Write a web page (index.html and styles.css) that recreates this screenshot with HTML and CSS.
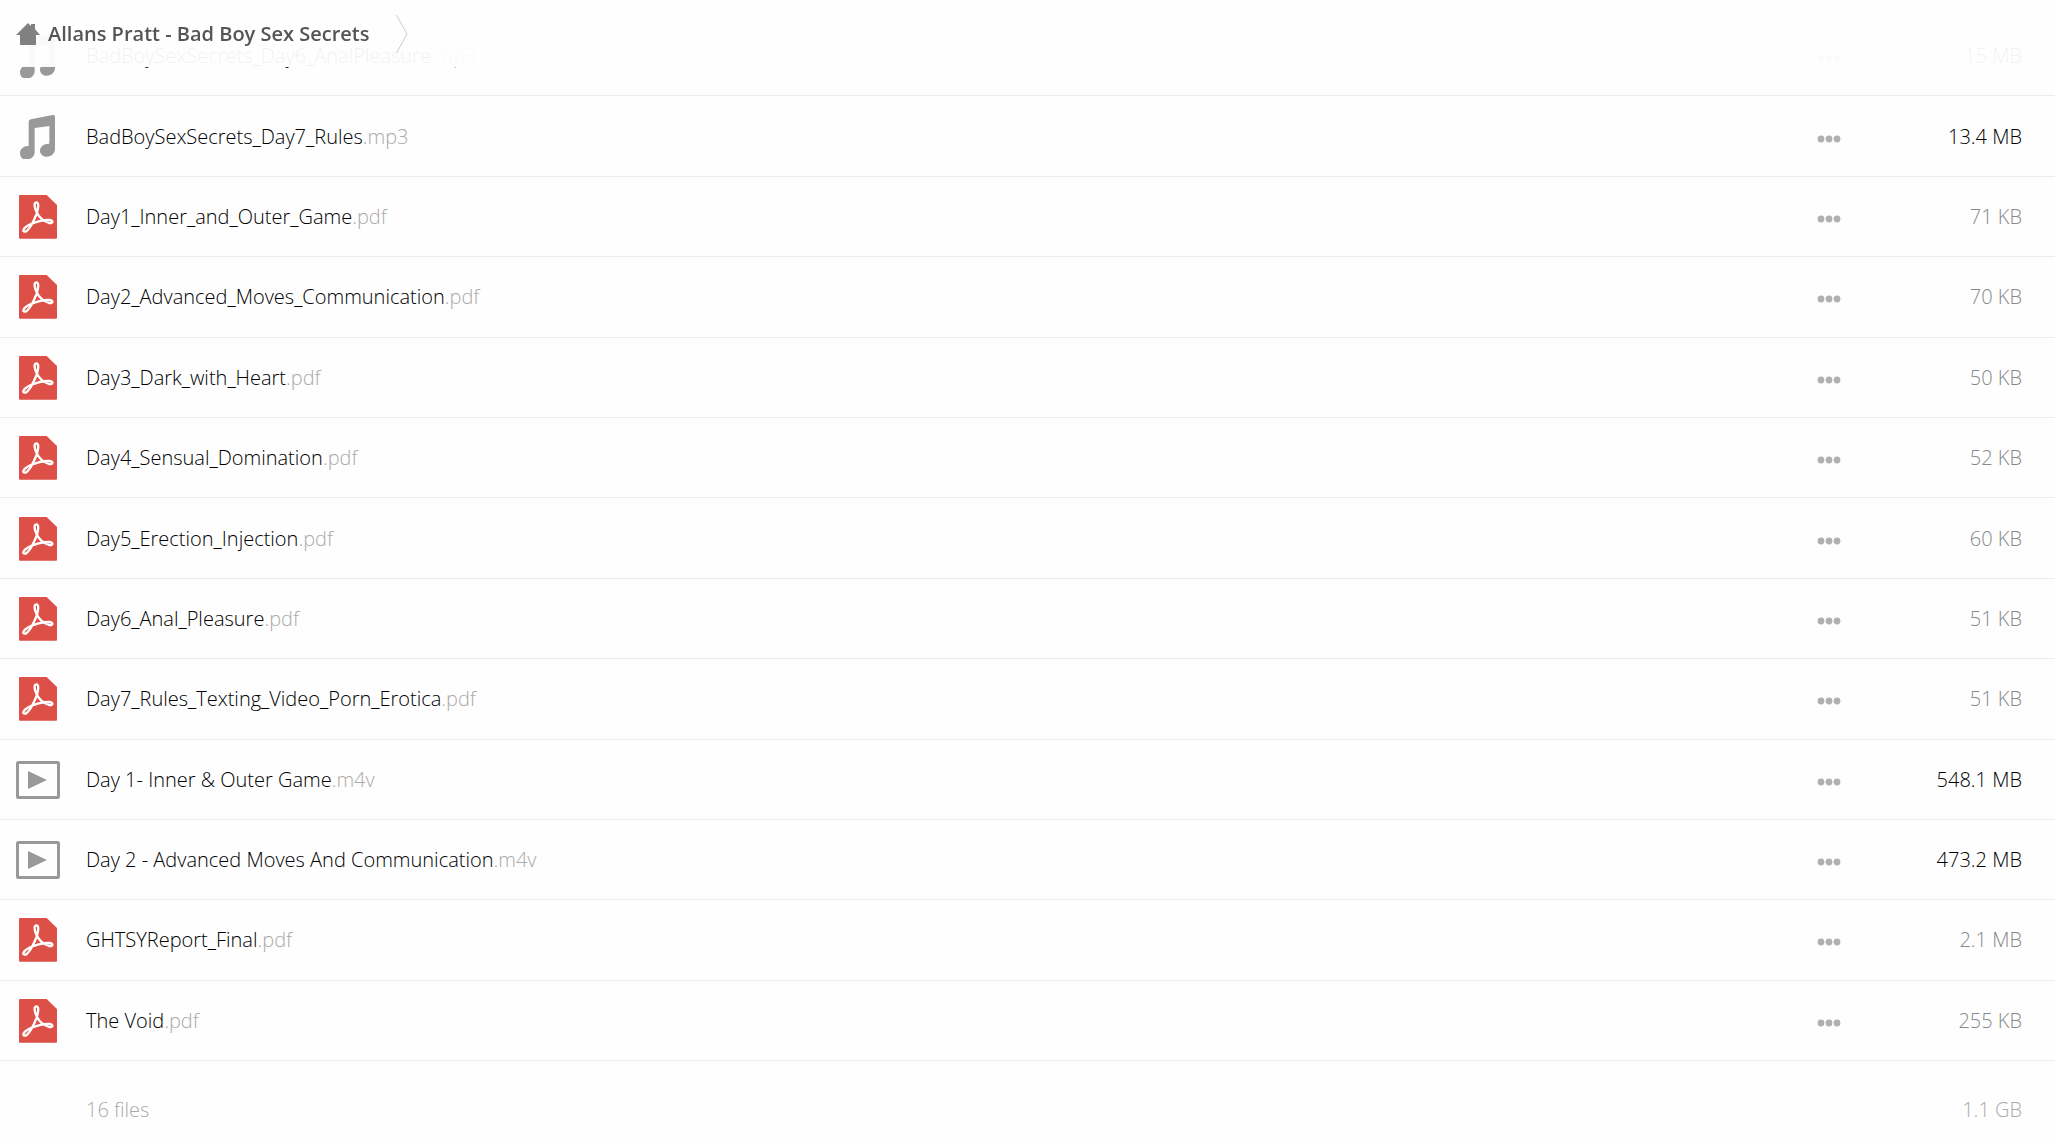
FILE: index.html
```html
<!DOCTYPE html>
<html lang="en">

<head>
    <meta charset="UTF-8">
    <meta name="viewport" content="width=device-width, initial-scale=1.0">
    <title>Allans Pratt - Bad Boy Sex Secrets</title>
    <link rel="stylesheet" href="styles.css">
</head>

<body>
    <!-- Shared icons -->
    <svg class="sprite" aria-hidden="true">
        <symbol id="icon-audio" viewBox="0 0 132 132">
            <path fill="#999" d="M38 21Q38 14 45 13L110 0Q117-1 117 6V102C117 115 106 125 92 125C80 125 72 117 72 107C72 95 84 85 100 86V33L56 39V112C56 125 45 134 31 134C19 134 12 126 12 115C12 102 23 92 38 93Z" />
        </symbol>
        <symbol id="icon-pdf" viewBox="-9 0 132 132">
            <path fill="#dd5047" d="M3 0H83L114 30V128Q114 131 111 131H3Q0 131 0 128V3Q0 0 3 0Z" />
            <path fill="none" stroke="#fff" stroke-width="7" stroke-linejoin="round" d="M52 22C44 22 46 38 53 52C59 64 72 79 90 84C103 86 104 76 91 75C73 74 45 81 28 91C10 101 10 111 18 110C28 109 45 78 53 56C59 38 60 22 52 22Z" />
        </symbol>
        <symbol id="icon-video" viewBox="0 0 44 44">
            <rect x="1.5" y="4.5" width="41" height="35" rx="1" fill="none" stroke="#999" stroke-width="3" />
            <path fill="#999" d="M12 13L31 22L12 31Z" />
        </symbol>
        <symbol id="icon-dots" viewBox="0 0 24 8">
            <circle cx="4" cy="4" r="3.4" />
            <circle cx="12" cy="4" r="3.4" />
            <circle cx="20" cy="4" r="3.4" />
        </symbol>
    </svg>

    <header class="breadcrumb">
        <a class="crumb" href="#">
            <svg class="home" viewBox="0 0 24 22" aria-hidden="true">
                <path fill="#808080" d="M12 0L15 3V1H19V6L24 12H20V22H4V12H0Z" />
            </svg>
            <span>Allans Pratt - Bad Boy Sex Secrets</span>
        </a>
        <svg class="chevron" viewBox="0 0 12 38" aria-hidden="true">
            <path fill="none" stroke="#ccc" d="M0.5 0L11 19L0.5 38" />
        </svg>
    </header>

    <main class="page">
        <ul class="files" id="files"></ul>
        <footer class="summary">
            <span class="count">16 files</span>
            <span class="total">1.1 GB</span>
        </footer>
    </main>

    <script>
        const files = [
            ['audio', 'BadBoySexSecrets_Day6_AnalPleasure', 'mp3', '15 MB'],
            ['audio', 'BadBoySexSecrets_Day7_Rules', 'mp3', '13.4 MB'],
            ['pdf', 'Day1_Inner_and_Outer_Game', 'pdf', '71 KB'],
            ['pdf', 'Day2_Advanced_Moves_Communication', 'pdf', '70 KB'],
            ['pdf', 'Day3_Dark_with_Heart', 'pdf', '50 KB'],
            ['pdf', 'Day4_Sensual_Domination', 'pdf', '52 KB'],
            ['pdf', 'Day5_Erection_Injection', 'pdf', '60 KB'],
            ['pdf', 'Day6_Anal_Pleasure', 'pdf', '51 KB'],
            ['pdf', 'Day7_Rules_Texting_Video_Porn_Erotica', 'pdf', '51 KB'],
            ['video', 'Day 1- Inner & Outer Game', 'm4v', '548.1 MB'],
            ['video', 'Day 2 - Advanced Moves And Communication', 'm4v', '473.2 MB'],
            ['pdf', 'GHTSYReport_Final', 'pdf', '2.1 MB'],
            ['pdf', 'The Void', 'pdf', '255 KB']
        ];

        let html = '';

        files.forEach(([type, name, ext, size]) => {
            // Media files get a darker size
            const sizeClass = type === 'pdf' ? 'size' : 'size large';
            html += `
                <li class="file">
                    <svg class="icon" aria-hidden="true"><use href="#icon-${type}"/></svg>
                    <a class="name" href="#">${name.replace('&', '&amp;')}<span class="ext">.${ext}</span></a>
                    <button class="more" type="button" aria-label="More"><svg class="dots"><use href="#icon-dots"/></svg></button>
                    <span class="${sizeClass}">${size}</span>
                </li>
            `;
        });

        document.getElementById('files').innerHTML = html;
    </script>
</body>

</html>
```
FILE: styles.css
```css
* {
    box-sizing: border-box;
}

body {
    margin: 0;
    background-color: #fefefe;
    color: #000;
    font-family: "Open Sans", sans-serif;
    font-size: 20px;
    font-weight: 300;
    line-height: 28px;
}

a {
    color: inherit;
    text-decoration: none;
}

.sprite {
    display: none;
}

.breadcrumb {
    position: fixed;
    top: 0;
    left: 0;
    right: 0;
    z-index: 1;
    display: flex;
    align-items: center;
    gap: 26px;
    height: 67px;
    padding: 0 16px;
    background-color: rgba(254, 254, 254, 0.95);
}

.crumb {
    display: flex;
    align-items: center;
    gap: 8px;
    color: #555;
    font-weight: 600;
}

.home {
    width: 24px;
    height: 22px;
}

.chevron {
    width: 12px;
    height: 38px;
}

.page {
    display: flex;
    flex-direction: column;
    min-height: 100vh;
    padding-top: 16px;
}

.files {
    display: flex;
    flex: 1;
    flex-direction: column;
    margin: 0;
    padding: 0;
    list-style: none;
}

.file {
    display: flex;
    flex: 1;
    align-items: center;
    min-height: 64px;
    padding: 1px 33px 0 16px;
    border-bottom: 1px solid #ebebeb;
}

.icon {
    width: 44px;
    height: 44px;
    margin-right: 26px;
    overflow: visible;
}

.name {
    flex: 1;
}

.ext {
    color: #aaa;
}

.more {
    padding: 4px 0 0;
    border: none;
    background: none;
    cursor: pointer;
}

.dots {
    display: block;
    width: 24px;
    height: 8px;
    fill: #b0b0b0;
}

.size {
    width: 181px;
    color: #888;
    text-align: right;
}

.large {
    color: #000;
}

.summary {
    display: flex;
    justify-content: space-between;
    padding: 35px 33px 15px 86px;
    color: #aaa;
}
```
